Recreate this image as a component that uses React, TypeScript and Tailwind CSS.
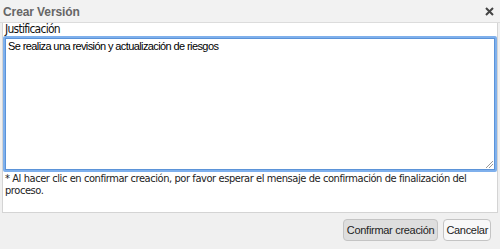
export default function App() {
  return (
    <div className="w-[500px] h-[249px] bg-[#f0f0f0] flex flex-col font-['Liberation_Sans',sans-serif] text-[11px] text-[#222] overflow-hidden">
      {/* Title bar */}
      <div className="h-[23px] flex items-center justify-between pl-[3px] pr-[6px] bg-[#f2f2f2] border-b border-[#dcdcdc]">
        <span className="font-bold text-[12px] tracking-[-0.1px] text-[#666] pt-[1px]">Crear Versión</span>
        <svg width="9" height="9" viewBox="0 0 9 9" className="text-[#444]">
          <path d="M1 1L8 8M8 1L1 8" stroke="currentColor" strokeWidth="2" />
        </svg>
      </div>

      {/* Content */}
      <div className="mx-[2px] h-[190px] bg-white border-x border-b border-[#d4d4d4] flex flex-col">
        <label className="pl-[2px] pt-[1px] text-[12px] leading-[11px] tracking-[-0.75px] text-[#111] font-['DejaVu_Sans_Condensed',sans-serif]">Justificación</label>
        <div className="mt-[1px] h-[136px] border-2 border-[#7fb0ec] rounded-[2px] relative">
          <textarea
            className="w-full h-full resize-none outline-none border border-[#5b93d8] px-[2px] py-[1px] text-[11px] leading-[13px] tracking-[-0.6px] text-black font-['Liberation_Sans',sans-serif]"
            defaultValue="Se realiza una revisión y actualización de riesgos"
          />
          <svg width="7" height="7" viewBox="0 0 7 7" className="absolute right-[2px] bottom-[2px]">
            <path d="M0 7L7 0M3 7L7 3" stroke="#999" strokeWidth="1" />
          </svg>
        </div>
        <p className="pl-[2px] pr-[8px] pt-[1px] text-[11px] leading-[12px] tracking-[-0.42px] text-[#222] font-['DejaVu_Sans_Condensed',sans-serif]">
          * Al hacer clic en confirmar creación, por favor esperar el mensaje de confirmación de finalización del proceso.
        </p>
      </div>

      {/* Footer */}
      <div className="flex-1 flex justify-end items-start gap-[5px] pt-[6px] pr-[9px]">
        <button className="h-[22px] px-[3px] rounded-[4px] border border-[#c4c4c4] bg-[#dedede] text-[11px] tracking-[-0.3px] text-[#222]">
          Confirmar creación
        </button>
        <button className="h-[22px] px-[2px] rounded-[4px] border border-[#c4c4c4] bg-[#f8f8f8] text-[11px] tracking-[-0.3px] text-[#222]">
          Cancelar
        </button>
      </div>
    </div>
  );
}
